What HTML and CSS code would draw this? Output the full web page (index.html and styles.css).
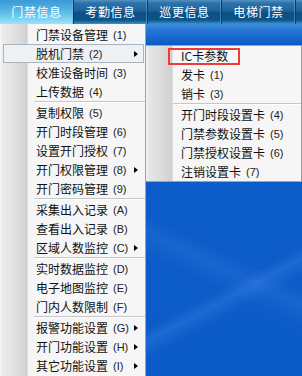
FILE: index.html
```html
<!DOCTYPE html>
<html lang="zh-CN">
<head>
<meta charset="utf-8">
<title>门禁信息</title>
<link rel="stylesheet" href="styles.css">
</head>
<body>
<div class="app">
  <nav class="tabs">
    <div class="tab active">门禁信息</div>
    <div class="tab">考勤信息</div>
    <div class="tab">巡更信息</div>
    <div class="tab">电梯门禁</div>
    <div class="tab-rest"></div>
  </nav>
  <div class="stage">
    <ul class="menu">
      <li class="item"><span class="label">门禁设备管理</span><span class="key">(1)</span></li>
      <li class="item hl"><span class="label">脱机门禁</span><span class="key">(2)</span><span class="arrow"></span></li>
      <li class="item"><span class="label">校准设备时间</span><span class="key">(3)</span></li>
      <li class="item"><span class="label">上传数据</span><span class="key">(4)</span></li>
      <li class="sep"></li>
      <li class="item"><span class="label">复制权限</span><span class="key">(5)</span></li>
      <li class="item"><span class="label">开门时段管理</span><span class="key">(6)</span></li>
      <li class="item"><span class="label">设置开门授权</span><span class="key">(7)</span></li>
      <li class="item"><span class="label">开门权限管理</span><span class="key">(8)</span><span class="arrow"></span></li>
      <li class="item"><span class="label">开门密码管理</span><span class="key">(9)</span></li>
      <li class="sep"></li>
      <li class="item"><span class="label">采集出入记录</span><span class="key">(A)</span></li>
      <li class="item"><span class="label">查看出入记录</span><span class="key">(B)</span></li>
      <li class="item"><span class="label">区域人数监控</span><span class="key">(C)</span><span class="arrow"></span></li>
      <li class="sep"></li>
      <li class="item"><span class="label">实时数据监控</span><span class="key">(D)</span></li>
      <li class="item"><span class="label">电子地图监控</span><span class="key">(E)</span></li>
      <li class="item"><span class="label">门内人数限制</span><span class="key">(F)</span></li>
      <li class="sep"></li>
      <li class="item"><span class="label">报警功能设置</span><span class="key">(G)</span><span class="arrow"></span></li>
      <li class="item"><span class="label">开门功能设置</span><span class="key">(H)</span><span class="arrow"></span></li>
      <li class="item"><span class="label">其它功能设置</span><span class="key">(I)</span><span class="arrow"></span></li>
    </ul>
    <div class="side">
      <ul class="submenu">
        <li class="item"><span class="label">IC卡参数</span></li>
        <li class="item"><span class="label">发卡</span><span class="key">(1)</span></li>
        <li class="item"><span class="label">销卡</span><span class="key">(3)</span></li>
        <li class="sep"></li>
        <li class="item"><span class="label">开门时段设置卡</span><span class="key">(4)</span></li>
        <li class="item"><span class="label">门禁参数设置卡</span><span class="key">(5)</span></li>
        <li class="item"><span class="label">门禁授权设置卡</span><span class="key">(6)</span></li>
        <li class="item"><span class="label">注销设置卡</span><span class="key">(7)</span></li>
        <li class="mark"></li>
      </ul>
    </div>
  </div>
</div>
</body>
</html>
```
FILE: styles.css
```css
* { box-sizing: border-box; }

html, body {
  margin: 0;
  padding: 0;
}

body {
  width: 302px;
  height: 376px;
  overflow: hidden;
  font-family: "Noto Sans CJK SC", "Noto Sans", sans-serif;
  font-size: 12px;
  color: #000;
}

.app {
  width: 302px;
  height: 376px;
  display: flex;
  flex-direction: column;
}

/* ---------- top tab bar ---------- */
.tabs {
  height: 24px;
  flex: none;
  display: flex;
  background: linear-gradient(180deg, #5592c2 0, #2b73aa 3px, #1d659c 10px, #0c4f85 13px, #0d548b 20px, #2f80b8 23px, #4a95c8 24px);
}

.tab {
  width: 74px;
  flex: none;
  display: flex;
  align-items: center;
  justify-content: center;
  color: #fff;
  letter-spacing: 0.6px;
  border-right: 1px solid #0a3c64;
  box-shadow: inset -1px 0 0 rgba(120, 180, 225, 0.45);
  padding-bottom: 1px;
}

.tab.active {
  background: linear-gradient(180deg, #3a9ad3 0, #4eafe0 8px, #6cc9ef 16px, #9ce3f8 24px);
}

.tab-rest {
  flex: 1;
}

/* ---------- stage ---------- */
.stage {
  flex: 1;
  display: flex;
  min-height: 0;
}

/* ---------- main menu ---------- */
.menu {
  width: 146px;
  flex: none;
  margin: 0;
  padding: 1px 0 0;
  list-style: none;
  border-right: 1px solid #a2a2a2;
  background: linear-gradient(90deg, #fbfbfb 0, #ececec 2px, #e1e1e1 14px, #d4d4d4 26px, #cacaca 27px, #f6f6f6 28px, #f6f6f6 100%);
}

.item {
  height: 19px;
  display: flex;
  align-items: center;
  padding-left: 36px;
  white-space: nowrap;
  color: #111;
}

.key {
  font-family: "Liberation Sans", sans-serif;
  font-size: 11px;
  margin-left: 5px;
  color: #222;
}

.item.hl {
  margin: 0 1px 0 3px;
  padding-left: 32px;
  border: 1px solid #a9b4bf;
  background: #edf1f4;
}

.arrow {
  margin-left: auto;
  margin-right: 7px;
  width: 0;
  height: 0;
  border-left: 4px solid #000;
  border-top: 3.5px solid transparent;
  border-bottom: 3.5px solid transparent;
}

.item.hl .arrow {
  margin-right: 5px;
}

.sep {
  height: 2px;
  margin-left: 34px;
  border-top: 1px solid #c6c6c6;
  background: #ffffff;
}

/* ---------- right side (desktop) ---------- */
.side {
  flex: 1;
  padding-top: 21px;
  background:
    linear-gradient(152deg, transparent 0 70%, rgba(110, 170, 255, 0.18) 73%, transparent 77%),
    linear-gradient(205deg, transparent 0 62%, rgba(110, 170, 255, 0.12) 66%, transparent 72%),
    linear-gradient(180deg, #3f90dd 0, #2a7bd5 5px, #1566cc 14px, #0c5cc8 21px, #0b5bc9 100%);
}

.submenu {
  position: relative;
  width: 156px;
  margin: 0;
  padding: 0;
  list-style: none;
  border: 1px solid #a2a2a2;
  border-left: none;
  border-right-color: #9a9a9a;
  background: linear-gradient(90deg, #f3f3f3 0, #e6e6e6 3px, #dddddd 14px, #d2d2d2 25px, #c9c9c9 26px, #f6f6f6 27px, #f6f6f6 100%);
}

.submenu .item {
  padding-left: 35px;
}

.submenu .sep {
  margin-left: 27px;
}

.mark {
  position: absolute;
  left: 22px;
  top: 2px;
  width: 72px;
  height: 17px;
  border: 2px solid #f03a3a;
}
```
